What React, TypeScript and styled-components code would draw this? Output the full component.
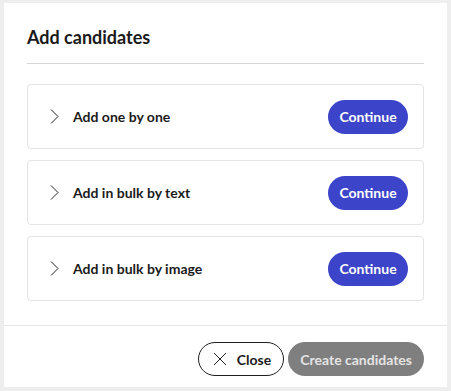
import React from 'react'
import styled, { createGlobalStyle } from 'styled-components'

const GlobalStyle = createGlobalStyle`
  html, body {
    margin: 0;
    padding: 0;
    background: #eeeeee;
    font-family: 'Lato', 'Open Sans', sans-serif;
    color: #1b1b1b;
  }
`

const options = ['Add one by one', 'Add in bulk by text', 'Add in bulk by image']

const Chevron = () => (
  <svg width='10' height='15' viewBox='0 0 10 15' fill='none'>
    <polyline points='2,0.5 9,7.5 2,14.5' stroke='#222' strokeWidth='1' />
  </svg>
)

const CloseIcon = () => (
  <svg width='14' height='14' viewBox='0 0 14 14' fill='none'>
    <path d='M1 1 L13 13 M13 1 L1 13' stroke='#222' strokeWidth='1' />
  </svg>
)

const App = () => {
  return (
    <>
      <GlobalStyle />
      <Panel>
        <Header>
          <Title>Add candidates</Title>
        </Header>
        <Content>
          {options.map((label) => (
            <OptionCard key={label}>
              <OptionLabel>
                <Chevron />
                <span>{label}</span>
              </OptionLabel>
              <ContinueButton>Continue</ContinueButton>
            </OptionCard>
          ))}
        </Content>
        <Footer>
          <GhostButton>
            <CloseIcon />
            Close
          </GhostButton>
          <DisabledButton disabled>Create candidates</DisabledButton>
        </Footer>
      </Panel>
    </>
  )
}

const Panel = styled.div`
  margin: 3px 4px 4px 4px;
  height: 384px;
  background: #ffffff;
  display: flex;
  flex-direction: column;
`

const Header = styled.div`
  margin: 0 23px;
  padding: 22px 0 14px;
  border-bottom: 1px solid #d6d6d6;
`

const Title = styled.h2`
  margin: 0;
  font-size: 18px;
  line-height: 24px;
  font-weight: 700;
  color: #1a1a1a;
`

const Content = styled.div`
  padding: 20px 23px 24px;
  display: flex;
  flex-direction: column;
  gap: 11px;
`

const OptionCard = styled.div`
  height: 65px;
  box-sizing: border-box;
  border: 1px solid #e4e4e4;
  border-radius: 4px;
  padding: 0 15px 0 21px;
  display: flex;
  align-items: center;
  justify-content: space-between;
`

const OptionLabel = styled.div`
  display: flex;
  align-items: center;
  gap: 14px;
  font-size: 14px;
  font-weight: 700;
  color: #1b1b1b;
`

const ContinueButton = styled.button`
  height: 34px;
  width: 80px;
  border: none;
  border-radius: 17px;
  background: #3c44c9;
  color: #ffffff;
  font-family: inherit;
  font-size: 14px;
  font-weight: 700;
  cursor: pointer;
`

const Footer = styled.div`
  border-top: 1px solid #e6e6e6;
  padding: 16px 23px 0;
  display: flex;
  justify-content: flex-end;
  gap: 4px;
`

const BaseButton = styled.button`
  height: 34px;
  box-sizing: border-box;
  border-radius: 17px;
  font-family: inherit;
  font-size: 14px;
  font-weight: 700;
  display: flex;
  align-items: center;
`

const GhostButton = styled(BaseButton)`
  border: 1px solid #1f1f1f;
  background: #ffffff;
  color: #1b1b1b;
  padding: 0 12px 0 14px;
  gap: 10px;
`

const DisabledButton = styled(BaseButton)`
  border: none;
  background: #7f7f7f;
  color: #e4e4e4;
  padding: 0 12px;
`

export default App
